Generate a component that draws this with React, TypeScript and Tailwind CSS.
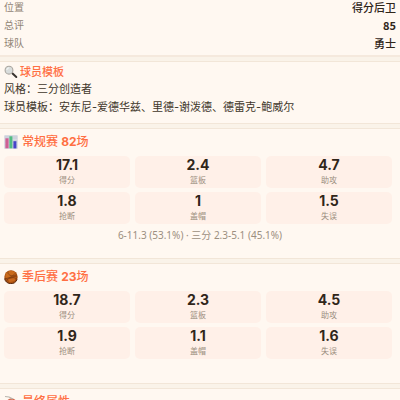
import React from 'react';

interface Stat {
  value: string;
  label: string;
}

interface StatsSectionProps {
  icon: React.ReactNode;
  name: string;
  games: number;
  stats: Stat[];
  shooting?: string;
}

const INFO = [
  { label: '位置', value: '得分后卫' },
  { label: '总评', value: <b>85</b> },
  { label: '球队', value: '勇士' },
];

const REGULAR: Stat[] = [
  { value: '17.1', label: '得分' },
  { value: '2.4', label: '篮板' },
  { value: '4.7', label: '助攻' },
  { value: '1.8', label: '抢断' },
  { value: '1', label: '盖帽' },
  { value: '1.5', label: '失误' },
];

const PLAYOFFS: Stat[] = [
  { value: '18.7', label: '得分' },
  { value: '2.3', label: '篮板' },
  { value: '4.5', label: '助攻' },
  { value: '1.9', label: '抢断' },
  { value: '1.1', label: '盖帽' },
  { value: '1.6', label: '失误' },
];

const SearchIcon = () => (
  <svg viewBox="0 0 14 14" className="w-[14px] h-[14px] shrink-0" aria-hidden="true">
    <path d="M8.3 8.3 12.3 12" stroke="#38332f" strokeWidth="2" strokeLinecap="round" />
    <circle cx="5" cy="5.2" r="3.9" fill="#d9dddc" stroke="#aaa69f" strokeWidth="1.1" />
    <path d="M2.8 5a2.4 2.4 0 0 1 2.3-2.2" fill="none" stroke="#f8faf9" strokeWidth="1" />
  </svg>
);

const ChartIcon = () => (
  <svg viewBox="0 0 14 14" className="w-[14px] h-[14px] shrink-0" aria-hidden="true">
    <rect x="0.3" y="0.3" width="13.4" height="13.4" rx="0.5" fill="#cdd1dc" />
    <path d="M.5 4.5h13M.5 8.5h13" stroke="#dfe2e9" strokeWidth="0.5" />
    <rect x="1.4" y="3.3" width="3.2" height="10" fill="#cf5f93" />
    <rect x="5.4" y="1.3" width="3" height="12" fill="#52bd83" />
    <rect x="9.4" y="6.2" width="3" height="7.2" fill="#4545c8" />
  </svg>
);

const BallIcon = () => (
  <svg viewBox="0 0 14 14" className="w-[14px] h-[14px] shrink-0" aria-hidden="true">
    <circle cx="7" cy="7" r="6.7" fill="#a9500f" />
    <path d="M1.5 4A6.4 6.4 0 0 1 12.3 3.5L8.5 6.5 1.5 8Z" fill="#c96a1b" />
    <path d="M3 7.5 6 9l6-2-1.5 4-5 1.2Z" fill="#c8671c" />
    <path d="M1 8.5C4 9 8 7 11.8 2.8M4 1.5c-.5 3 2 5 9 4.5M2.4 11.3C4 7.5 8.5 6.5 13 9" fill="none" stroke="#6f340f" strokeWidth="0.6" />
    <path d="M.6 8.5a6.5 6.5 0 0 0 12.4 1" fill="none" stroke="#59290f" strokeWidth="1" />
  </svg>
);

const DartIcon = () => (
  <svg viewBox="0 0 14 14" className="w-[14px] h-[14px] shrink-0" aria-hidden="true">
    <circle cx="7.5" cy="8.5" r="4.5" fill="#e8ddd4" stroke="#d7654a" strokeWidth="1.3" />
    <path d="M1 1.5 5 2l4 2" fill="none" stroke="#b8b5ad" strokeWidth="1.2" />
  </svg>
);

const Section = ({ children, className = '' }: { children: React.ReactNode; className?: string }) => (
  <section className={`bg-[#fff8f1] border-y border-[#f2e6d8] px-1 shrink-0 ${className}`}>{children}</section>
);

const Title = ({ icon, children }: { icon: React.ReactNode; children: React.ReactNode }) => (
  <h2 className="flex items-center gap-1 h-4 text-[12px] leading-4 font-medium text-[#ff6f43]">
    {icon}
    <span>{children}</span>
  </h2>
);

const StatsSection: React.FC<StatsSectionProps> = ({ icon, name, games, stats, shooting }) => (
  <Section className="pt-[5px] pb-4">
    <Title icon={icon}>
      {name} <b>{games}</b>场
    </Title>
    <div className="grid grid-cols-3 gap-x-[5px] gap-y-1 mt-[6px] mb-2 pr-1">
      {stats.map((stat) => (
        <div key={stat.label} className="flex flex-col items-center h-8 rounded-[5px] bg-[#fff0e8]">
          <span className="text-[14px] leading-[18px] font-bold text-[#30261a]">{stat.value}</span>
          <span className="text-[8px] leading-[12px] text-[#9c8f80]">{stat.label}</span>
        </div>
      ))}
    </div>
    {shooting && (
      <p className="-mt-1 text-center font-['Noto_Sans','Noto_Sans_CJK_SC',sans-serif] text-[10px] leading-[14px] text-[#9c8f80]">
        {shooting}
      </p>
    )}
  </Section>
);

const App = () => {
  return (
    <main className="h-screen overflow-hidden flex flex-col gap-1 bg-[#faf3e9] text-[#40362a] font-['Inter','Noto_Sans_CJK_SC',sans-serif]">
      {/* Basic info */}
      <section className="shrink-0 bg-[#fff8f1] border-b-2 border-[#f5e9dd] px-1 pb-px">
        <dl>
          {INFO.map((row) => (
            <div key={row.label} className="flex justify-between h-[18px] text-[11px] leading-[14px]">
              <dt className="text-[10px] text-[#918475]">{row.label}</dt>
              <dd className="font-['Noto_Sans_CJK_SC',sans-serif] font-medium text-[#30261a]">{row.value}</dd>
            </div>
          ))}
        </dl>
      </section>

      {/* Player template */}
      <Section className="pt-[2px] pb-[7px]">
        <h2 className="flex items-center gap-[2px] h-4 text-[11px] leading-4 font-medium text-[#ff6f43]">
          <SearchIcon />
          <span>球员模板</span>
        </h2>
        <p className="text-[11px] leading-[18px]">风格：三分创造者</p>
        <p className="text-[11px] leading-[18px]">球员模板：安东尼-爱德华兹、里德-谢泼德、德雷克-鲍威尔</p>
      </Section>

      <StatsSection
        icon={<ChartIcon />}
        name="常规赛"
        games={82}
        stats={REGULAR}
        shooting="6-11.3 (53.1%) · 三分 2.3-5.1 (45.1%)"
      />
      <StatsSection icon={<BallIcon />} name="季后赛" games={23} stats={PLAYOFFS} />

      {/* Final attributes */}
      <Section className="pt-[5px] pb-4">
        <Title icon={<DartIcon />}>最终属性</Title>
      </Section>
    </main>
  );
};

export default App;
